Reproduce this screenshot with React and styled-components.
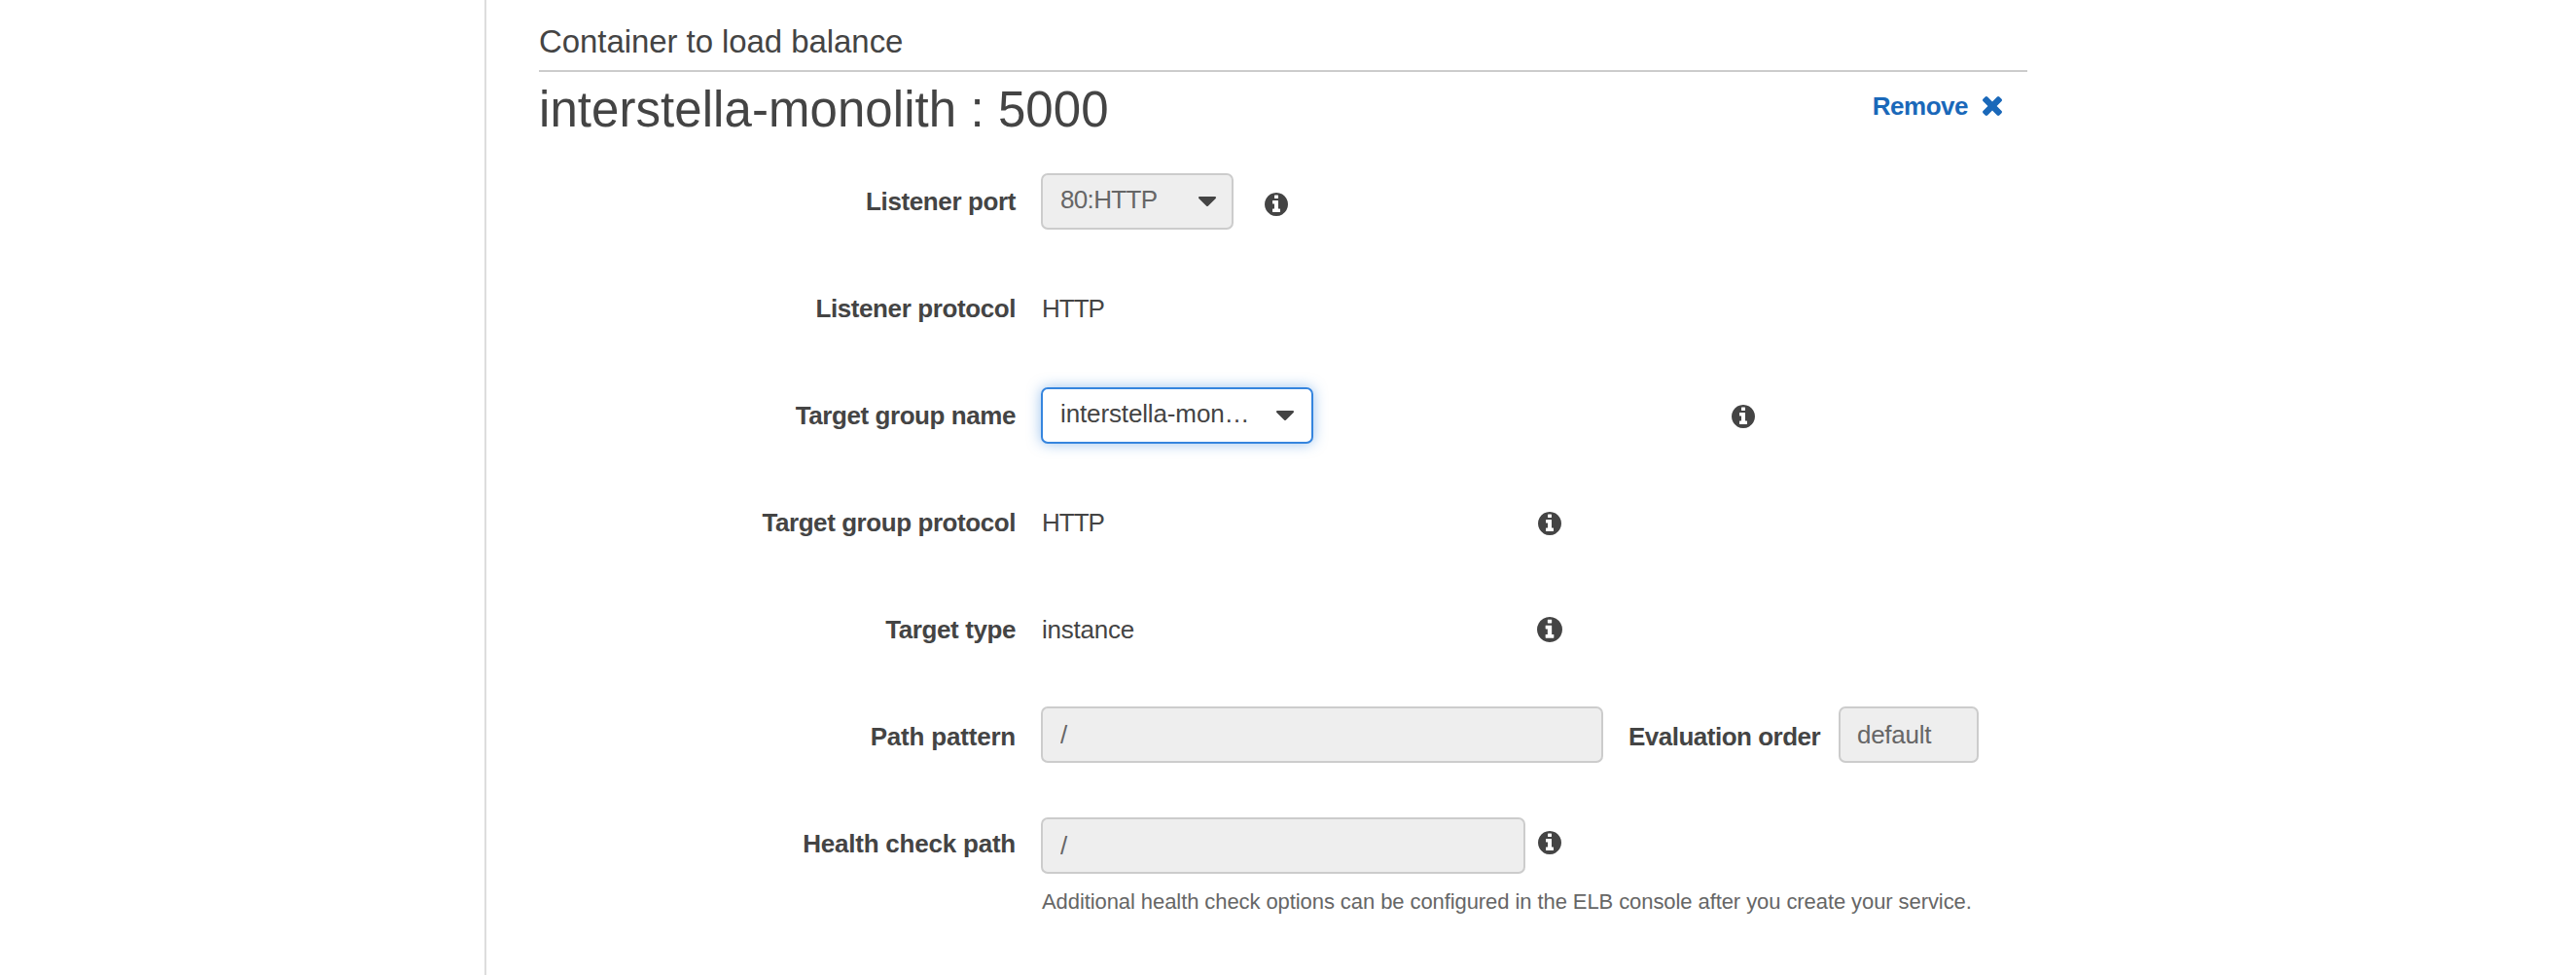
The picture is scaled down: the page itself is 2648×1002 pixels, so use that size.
import React from "react";
import styled, { createGlobalStyle, css } from "styled-components";

const GlobalStyle = createGlobalStyle`
  *, *::before, *::after { box-sizing: border-box; }
  body {
    margin: 0;
    background: #fff;
    color: #444;
    font-family: "Liberation Sans", Arial, Helvetica, sans-serif;
    font-size: 26px;
  }
`;

const Page = styled.div`
  display: flex;
  height: 1002px;
  overflow: hidden;
  padding-left: 498px;
`;

const Panel = styled.main`
  width: 1586px;
  border-left: 2px solid #ddd;
  padding-left: 54px;
`;

const SectionHeading = styled.h3`
  margin: 0;
  padding-top: 14px;
  border-bottom: 2px solid #ccc;
  font-size: 33px;
  font-weight: 400;
  line-height: 58px;
  letter-spacing: -0.07px;
`;

const TitleBar = styled.header`
  display: flex;
  justify-content: space-between;
  align-items: flex-start;
  height: 78px;
  padding-right: 26px;
`;

const Title = styled.h2`
  margin: 0;
  font-size: 51px;
  font-weight: 400;
  line-height: 78px;
  letter-spacing: 0.06px;
`;

const RemoveButton = styled.button`
  display: flex;
  align-items: center;
  gap: 15px;
  height: 70px;
  padding: 0;
  border: 0;
  background: none;
  color: #1a68b9;
  font: inherit;
  font-weight: 700;
  letter-spacing: -0.5px;
  cursor: pointer;
`;

const Row = styled.div`
  display: grid;
  grid-template-columns: 490px 1fr;
  column-gap: 26px;
  align-items: center;
  height: 110px;
`;

const Label = styled.label`
  font-weight: 700;
  text-align: right;
  white-space: nowrap;
  letter-spacing: ${(p) => p.$tracking}px;
`;

const InlineLabel = styled(Label)`
  width: 216px;
  margin-left: 26px;
  text-align: left;
`;

const Control = styled.div`
  display: flex;
  align-items: center;
`;

const Value = styled.span`
  width: ${(p) => p.$width || 511}px;
  padding-left: 1px;
  letter-spacing: ${(p) => p.$tracking}px;
`;

const box = css`
  height: 58px;
  border: 2px solid #ccc;
  border-radius: 7px;
  background: #eee;
  color: #666;
  font: inherit;
`;

const Select = styled.button`
  ${box}
  display: flex;
  align-items: center;
  justify-content: space-between;
  width: ${(p) => p.$width}px;
  padding: 0 ${(p) => p.$end}px 0 18px;
  letter-spacing: ${(p) => p.$tracking}px;

  ${(p) =>
    p.$focused &&
    css`
      border-color: #3585de;
      background: #fff;
      color: #444;
      box-shadow: 0 0 14px rgba(53, 133, 222, 0.5);
    `}
`;

const SelectText = styled.span`
  padding-bottom: 4px;
  white-space: nowrap;
`;

const TextInput = styled.input`
  ${box}
  width: ${(p) => p.$width}px;
  margin-top: ${(p) => p.$shift}px;
  padding: 0 17px 0 ${(p) => p.$start || 18}px;
  letter-spacing: -0.28px;
  opacity: 1;
`;

const Help = styled.p`
  margin: -8px 0 0 517px;
  font-size: 22px;
  line-height: 26px;
  letter-spacing: -0.08px;
  color: #666;
  white-space: nowrap;
`;

const InfoSvg = styled.svg`
  flex: none;
  display: block;
  width: ${(p) => p.$size}px;
  height: ${(p) => p.$size}px;
  margin-left: ${(p) => p.$gap}px;
  margin-top: ${(p) => p.$shift}px;
  fill: #444;
`;

const CaretSvg = styled.svg`
  flex: none;
  width: 18px;
  height: 10px;
  fill: #444;
`;

const CloseSvg = styled.svg`
  width: 20px;
  height: 20px;
  fill: currentColor;
`;

const Info = ({ size = 24, gap = 0, shift = 0 }) => (
  <InfoSvg viewBox="128 128 1536 1536" $size={size} $gap={gap} $shift={shift}>
    <path d="M1152 1376v-160q0-14-9-23t-23-9h-96v-512q0-14-9-23t-23-9h-320q-14 0-23 9t-9 23v160q0 14 9 23t23 9h96v320h-96q-14 0-23 9t-9 23v160q0 14 9 23t23 9h448q14 0 23-9t9-23zm-128-896v-160q0-14-9-23t-23-9h-192q-14 0-23 9t-9 23v160q0 14 9 23t23 9h192q14 0 23-9t9-23zm640 416q0 209-103 385.5t-279.5 279.5-385.5 103-385.5-103-279.5-279.5-103-385.5 103-385.5 279.5-279.5 385.5-103 385.5 103 279.5 279.5 103 385.5z" />
  </InfoSvg>
);

const Caret = () => (
  <CaretSvg viewBox="384 640 1024 576" preserveAspectRatio="none">
    <path d="M1408 704q0 26-19 45l-448 448q-19 19-45 19t-45-19l-448-448q-19-19-19-45t19-45 45-19h896q26 0 45 19t19 45z" />
  </CaretSvg>
);

const Close = () => (
  <CloseSvg viewBox="302 366 1188 1188">
    <path d="M1490 1322q0 40-28 68l-136 136q-28 28-68 28t-68-28l-294-294-294 294q-28 28-68 28t-68-28l-136-136q-28-28-28-68t28-68l294-294-294-294q-28-28-28-68t28-68l136-136q28-28 68-28t68 28l294 294 294-294q28-28 68-28t68 28l136 136q28 28 28 68t-28 68l-294 294 294 294q28 28 28 68z" />
  </CloseSvg>
);

export default function App() {
  return (
    <>
      <GlobalStyle />
      <Page>
        <Panel>
          <SectionHeading>Container to load balance</SectionHeading>
          <TitleBar>
            <Title>interstella-monolith : 5000</Title>
            <RemoveButton>
              Remove
              <Close />
            </RemoveButton>
          </TitleBar>

          <Row>
            <Label $tracking={-0.38}>Listener port</Label>
            <Control>
              <Select $width={198} $end={16} $tracking={-0.65}>
                <SelectText>80:HTTP</SelectText>
                <Caret />
              </Select>
              <Info gap={32} shift={6} />
            </Control>
          </Row>

          <Row>
            <Label $tracking={-0.4}>Listener protocol</Label>
            <Control>
              <Value $tracking={-1}>HTTP</Value>
            </Control>
          </Row>

          <Row>
            <Label $tracking={-0.43}>Target group name</Label>
            <Control>
              <Select $width={280} $end={18} $tracking={-0.13} $focused>
                <SelectText>interstella-mon…</SelectText>
                <Caret />
              </Select>
              <Info gap={430} shift={2} />
            </Control>
          </Row>

          <Row>
            <Label $tracking={-0.43}>Target group protocol</Label>
            <Control>
              <Value $tracking={-1}>HTTP</Value>
              <Info shift={2} />
            </Control>
          </Row>

          <Row>
            <Label $tracking={-0.4}>Target type</Label>
            <Control>
              <Value $width={510} $tracking={-0.25}>
                instance
              </Value>
              <Info size={26} />
            </Control>
          </Row>

          <Row>
            <Label htmlFor="path-pattern" $tracking={-0.2}>
              Path pattern
            </Label>
            <Control>
              <TextInput id="path-pattern" $width={578} $shift={-4} value="/" disabled readOnly />
              <InlineLabel htmlFor="evaluation-order" $tracking={-0.5}>
                Evaluation order
              </InlineLabel>
              <TextInput
                id="evaluation-order"
                $width={144}
                $shift={-4}
                $start={17}
                value="default"
                disabled
                readOnly
              />
            </Control>
          </Row>

          <Row>
            <Label htmlFor="health-check-path" $tracking={-0.22}>
              Health check path
            </Label>
            <Control>
              <TextInput id="health-check-path" $width={498} $shift={4} value="/" disabled readOnly />
              <Info gap={13} shift={-2} />
            </Control>
          </Row>
          <Help>
            Additional health check options can be configured in the ELB console after you create your
            service.
          </Help>
        </Panel>
      </Page>
    </>
  );
}
